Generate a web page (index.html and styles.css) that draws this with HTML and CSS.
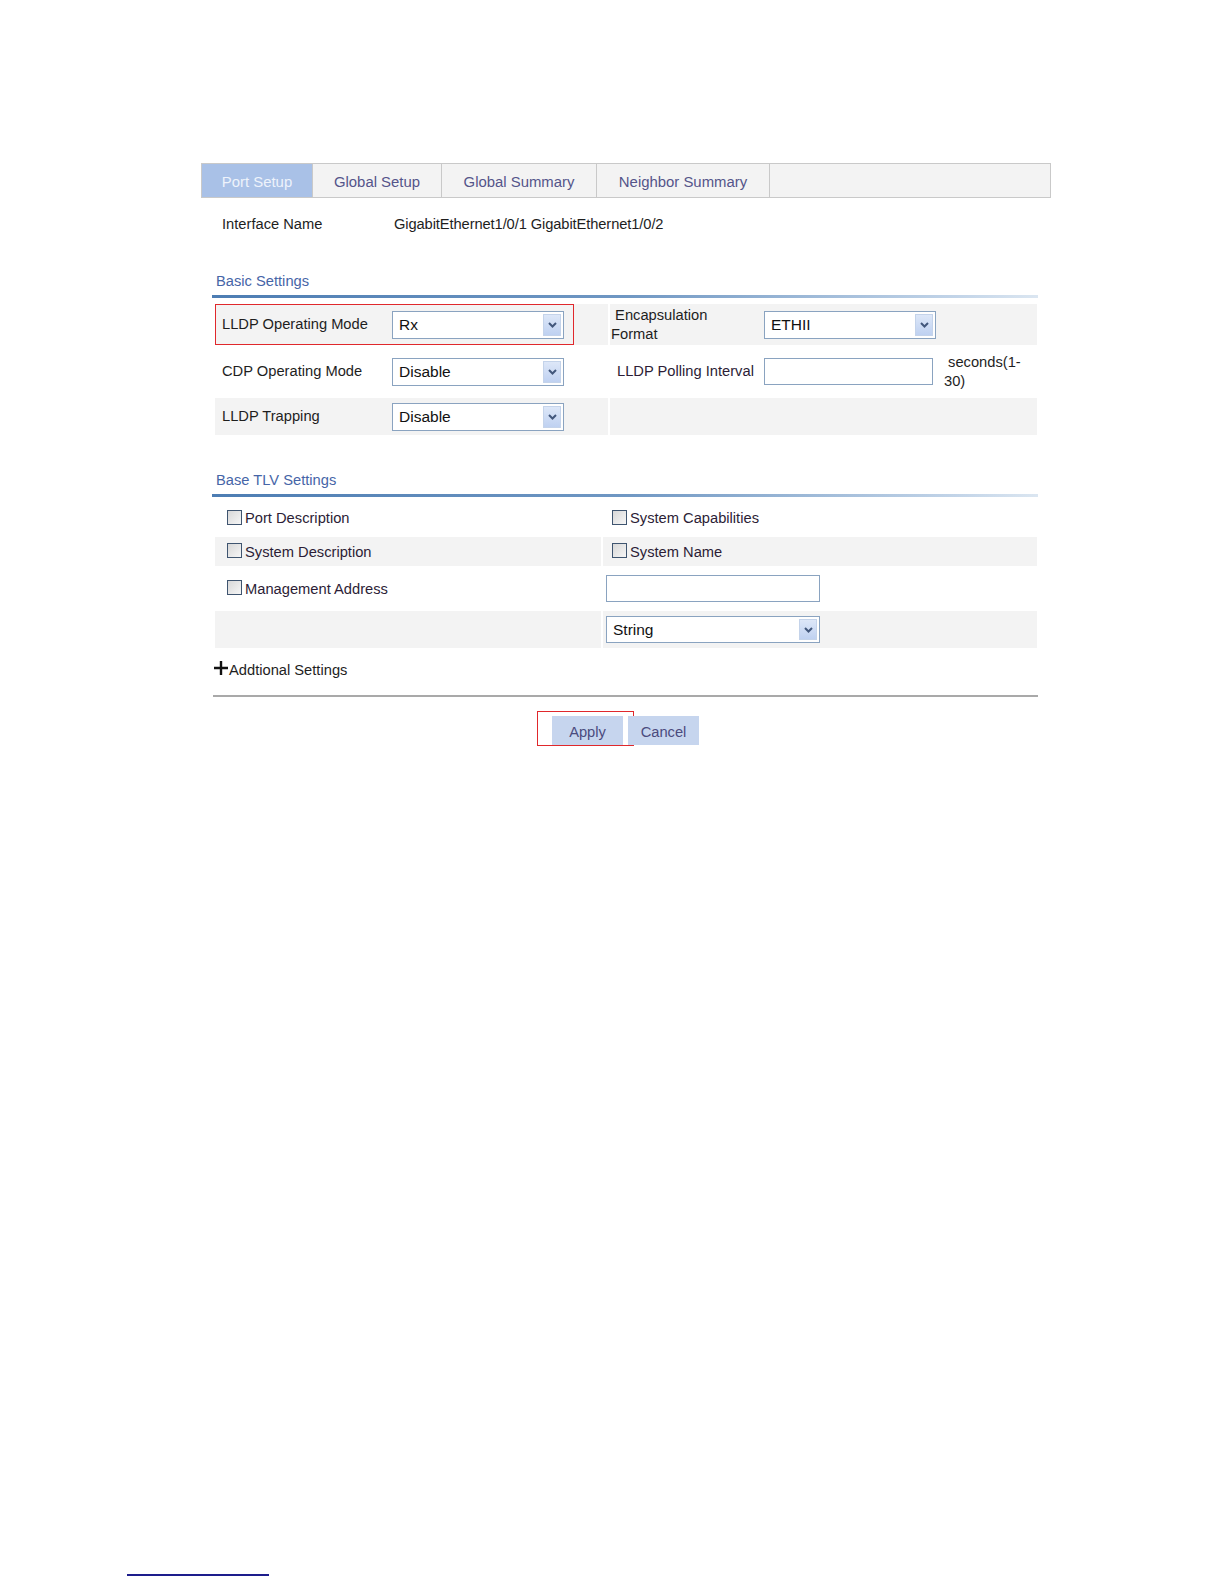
FILE: index.html
```html
<!DOCTYPE html>
<html>
<head>
<meta charset="utf-8">
<title>LLDP Port Setup</title>
<link rel="stylesheet" href="styles.css">
</head>
<body>
<div class="page">
  <div class="tabs">
    <div class="tab tab-port active">Port Setup</div>
    <div class="tab tab-gsetup">Global Setup</div>
    <div class="tab tab-gsum">Global Summary</div>
    <div class="tab tab-nsum">Neighbor Summary</div>
  </div>

  <div class="content">
    <div class="iface-row">
      <span class="iface-label">Interface Name</span>
      <span class="iface-value">GigabitEthernet1/0/1 GigabitEthernet1/0/2</span>
    </div>

    <div class="section-title basic-title">Basic Settings</div>
    <div class="section-rule"></div>

    <div class="basic-grid">
      <div class="highlight-box lldp-box"></div>
      <div class="brow r1 alt">
        <div class="cell a">LLDP Operating Mode</div>
        <div class="cell b">
          <div class="select"><span class="sel-text">Rx</span><span class="sel-arrow"><svg width="9" height="6" viewBox="0 0 9 6"><path d="M1 1 L4.5 4.5 L8 1" fill="none" stroke="#42577c" stroke-width="2"/></svg></span></div>
        </div>
        <div class="cell c"><span class="encap">&nbsp;Encapsulation Format</span></div>
        <div class="cell d">
          <div class="select"><span class="sel-text">ETHII</span><span class="sel-arrow"><svg width="9" height="6" viewBox="0 0 9 6"><path d="M1 1 L4.5 4.5 L8 1" fill="none" stroke="#42577c" stroke-width="2"/></svg></span></div>
        </div>
      </div>
      <div class="brow r2">
        <div class="cell a">CDP Operating Mode</div>
        <div class="cell b">
          <div class="select"><span class="sel-text">Disable</span><span class="sel-arrow"><svg width="9" height="6" viewBox="0 0 9 6"><path d="M1 1 L4.5 4.5 L8 1" fill="none" stroke="#42577c" stroke-width="2"/></svg></span></div>
        </div>
        <div class="cell c pad">LLDP Polling Interval</div>
        <div class="cell d">
          <div class="textbox poll"></div>
          <span class="unit">&nbsp;seconds(1-30)</span>
        </div>
      </div>
      <div class="brow r3 alt">
        <div class="cell a">LLDP Trapping</div>
        <div class="cell b">
          <div class="select"><span class="sel-text">Disable</span><span class="sel-arrow"><svg width="9" height="6" viewBox="0 0 9 6"><path d="M1 1 L4.5 4.5 L8 1" fill="none" stroke="#42577c" stroke-width="2"/></svg></span></div>
        </div>
        <div class="cell c"></div>
        <div class="cell d"></div>
      </div>
    </div>

    <div class="section-title tlv-title">Base TLV Settings</div>
    <div class="section-rule"></div>

    <div class="tlv-grid">
      <div class="trow t1">
        <div class="tcell left"><span class="cb"></span><span class="cb-label">Port Description</span></div>
        <div class="tcell right"><span class="cb"></span><span class="cb-label">System Capabilities</span></div>
      </div>
      <div class="trow t2 alt">
        <div class="tcell left"><span class="cb"></span><span class="cb-label">System Description</span></div>
        <div class="tcell right"><span class="cb"></span><span class="cb-label">System Name</span></div>
      </div>
      <div class="trow t3">
        <div class="tcell left"><span class="cb"></span><span class="cb-label">Management Address</span></div>
        <div class="tcell right field"><div class="textbox mgmt"></div></div>
      </div>
      <div class="trow t4 alt">
        <div class="tcell left"></div>
        <div class="tcell right field">
          <div class="select wide"><span class="sel-text">String</span><span class="sel-arrow"><svg width="9" height="6" viewBox="0 0 9 6"><path d="M1 1 L4.5 4.5 L8 1" fill="none" stroke="#42577c" stroke-width="2"/></svg></span></div>
        </div>
      </div>
    </div>

    <div class="additional">
      <svg class="plus" width="16" height="16" viewBox="0 0 16 16"><path d="M8 1 V15 M1 8 H15" stroke="#111" stroke-width="2.4"/></svg>
      <span>Addtional Settings</span>
    </div>
    <div class="footer-rule"></div>

    <div class="buttons">
      <div class="btn apply">Apply<span class="highlight-box apply-box"></span></div>
      <div class="btn">Cancel</div>
    </div>
  </div>
</div>
<div class="footnote-rule"></div>
</body>
</html>
```

FILE: styles.css
```css
body {
  margin: 0;
  background: #fff;
  font-family: "Liberation Sans", Arial, sans-serif;
  font-size: 14.7px;
  color: #1e1e1e;
}

.page {
  padding: 163px 0 0 201px;
  width: 850px;
}

/* Tabs */
.tabs {
  display: flex;
  height: 35px;
  width: 850px;
  box-sizing: border-box;
  border: 1px solid #c9c9c9;
  background: #f3f3f3;
}
.tab {
  box-sizing: border-box;
  display: flex;
  align-items: center;
  justify-content: center;
  padding-top: 3px;
  border-right: 1px solid #c9c9c9;
  color: #55558a;
  font-size: 14.9px;
}
.tab-port { width: 111px; }
.tab-gsetup { width: 129px; }
.tab-gsum { width: 155px; }
.tab-nsum { width: 173px; }
.tab.active {
  background: #a9c1e7;
  color: #eef3fb;
}

/* Content */
.content {
  margin-left: 11px;
  width: 826px;
}

.iface-row {
  display: flex;
  margin-top: 17px;
  line-height: 19px;
}
.iface-label {
  width: 172px;
  padding-left: 10px;
}
.iface-value { letter-spacing: -0.1px; }

.section-title {
  line-height: 19px;
  padding-left: 4px;
  color: #4665a7;
}
.basic-title { margin-top: 38px; }
.tlv-title { margin-top: 36px; }

.section-rule {
  margin-top: 4px;
  height: 3px;
  background: linear-gradient(to right, #4d7db3 0%, #6f97c3 50%, #c2d4e8 90%, #dbe6f1 100%);
}

/* Basic settings grid */
.basic-grid {
  position: relative;
  margin-top: 6px;
  margin-left: 3px;
  width: 822px;
}
.brow {
  display: grid;
  grid-template-columns: 172px 221px 148px 281px;
}
.brow.r1 { height: 41px; }
.brow.r2 { height: 53px; }
.brow.r3 { height: 37px; }
.brow.alt .cell { background: #f3f3f3; }
.cell {
  display: flex;
  align-items: center;
  line-height: 19px;
}
.cell.a { padding-left: 7px; }
.cell.b { padding-left: 5px; }
.cell.c { margin-left: 2px; padding-left: 1px; }
.cell.c.pad { padding-left: 7px; color: #2c1d36; }
.cell.d { padding-left: 8px; }
.encap { width: 103px; }

.unit {
  width: 86px;
  margin-left: 11px;
  line-height: 19px;
}

/* Select & inputs */
.select {
  box-sizing: border-box;
  width: 172px;
  height: 28px;
  border: 1px solid #8aa3c0;
  background: #fff;
  display: flex;
  align-items: center;
  justify-content: space-between;
  font-size: 15.5px;
  color: #111;
}
.select.wide { width: 214px; height: 27px; }
.sel-text { padding-left: 6px; }
.sel-arrow {
  box-sizing: border-box;
  width: 18px;
  height: calc(100% - 4px);
  margin-right: 2px;
  display: flex;
  align-items: center;
  justify-content: center;
  background: linear-gradient(#dde7f8, #bfd1f1);
  border: 1px solid #c4d3ea;
}

.textbox {
  box-sizing: border-box;
  height: 27px;
  border: 1px solid #8aa3c0;
  background: #fff;
}
.textbox.poll { width: 169px; }
.textbox.mgmt { width: 214px; }

/* Highlight boxes */
.highlight-box {
  position: absolute;
  box-sizing: border-box;
  border: 1.5px solid #e0282c;
  pointer-events: none;
}
.lldp-box {
  left: 0;
  top: 0;
  width: 359px;
  height: 41px;
  z-index: 2;
}

/* TLV grid */
.tlv-grid {
  margin-top: 2px;
  margin-left: 3px;
  width: 822px;
}
.trow {
  display: grid;
  grid-template-columns: 386px 434px;
  column-gap: 2px;
}
.trow.t1 { height: 38px; }
.trow.t2 { height: 29px; }
.trow.t3 { height: 45px; }
.trow.t4 { height: 37px; }
.trow.alt .tcell { background: #f3f3f3; }
.tcell {
  display: flex;
  align-items: center;
  color: #2c1d36;
}
.tcell.left { padding-left: 12px; }
.tcell.right { padding-left: 9px; }
.tcell.right.field { padding-left: 3px; }

.cb {
  box-sizing: border-box;
  width: 15px;
  height: 15px;
  border: 1px solid #3f5570;
  background: linear-gradient(135deg, #d8d8d8, #f6f6f6);
  margin-right: 3px;
  margin-top: -2px;
}

/* Additional settings */
.additional {
  margin-top: 13px;
  display: flex;
  align-items: center;
  line-height: 19px;
  color: #1e1e1e;
}
.plus {
  margin-left: 1px;
  margin-top: -5px;
}

.footer-rule {
  margin-top: 15px;
  margin-left: 1px;
  width: 825px;
  height: 2px;
  background: #a9a9a9;
}

.buttons {
  margin-top: 19px;
  display: flex;
  justify-content: center;
  gap: 5px;
  padding-left: 1px;
}
.btn {
  position: relative;
  width: 71px;
  height: 29px;
  display: flex;
  align-items: center;
  justify-content: center;
  padding-top: 3px;
  box-sizing: border-box;
  background: #c6d5ee;
  color: #4b4b7e;
}
.apply-box {
  left: -15px;
  top: -5px;
  width: 97px;
  height: 35px;
}

.footnote-rule {
  margin: 829px 0 0 127px;
  width: 142px;
  height: 2px;
  background: #1d1d8c;
}
```
